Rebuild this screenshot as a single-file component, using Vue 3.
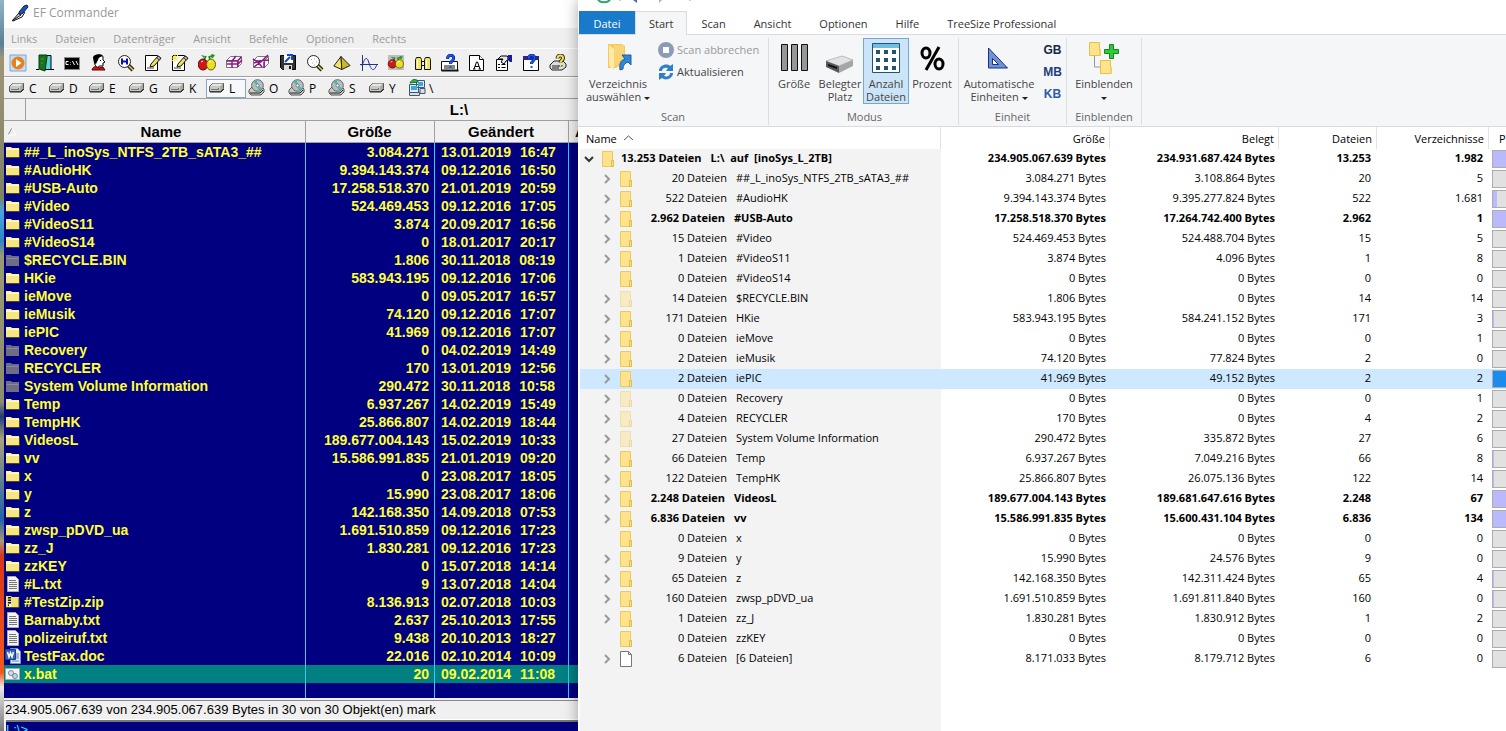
<script setup>
const menu = ['Links', 'Dateien', 'Datenträger', 'Ansicht', 'Befehle', 'Optionen', 'Rechts']

const glass = '<path d="M11.5 11.5l4.500 4.500" stroke="#222" stroke-width="4"/><path d="M12 12l4 4" stroke="#e8d84a" stroke-width="1.500"/><circle cx="7.500" cy="7.500" r="6" fill="#fff" stroke="#222"/>'
const box = '<path d="M1.500 6.500l4-4h11v7l-4 4h-11zM1.500 6.500h11l4-4M12.500 6.500v7" fill="#fff" stroke="#777"/>'
const page = '<path d="M1.500 1.500h12v15h-12z" fill="#fff" stroke="#000"/>'
const pen = '<path d="M6 13l1-3 7-8 3 2-7 8z" fill="#f2e25b" stroke="#111"/><path d="M14 2l3 2-1.500 2-3-2z" fill="#c9a0dc" stroke="#333"/><path d="M3 14h7" stroke="#444"/>'
const fruit = '<path d="M6 6l2-4M12 6l-1-4" stroke="#137a13" stroke-width="1.500"/><path d="M11 3l3-3 3 1-2 3zM6 4L3 1l4 1z" fill="#16a016"/><ellipse cx="5" cy="10.500" rx="4.800" ry="5.500" fill="#d0181c" stroke="#600"/><ellipse cx="13" cy="10.500" rx="4.500" ry="5.500" fill="#e9df23" stroke="#665b00"/><path d="M3 8l2-1M11 8l2-1" stroke="#fff"/>'
const question = '<path d="M6.500 5c0-5 7-5 6 0-.5 2-3 2-3 5" fill="none" stroke="#00009c" stroke-width="3"/><path d="M6.500 5c0-5 7-5 6 0-.5 2-3 2-3 5M9.500 12v2" fill="none" stroke="#1b5be0" stroke-width="2"/>'

const tools = [
  { name: 'Start', art: '<path d="M1 1h16v16H1z" fill="#bfe0f5" stroke="#78a9cf"/><circle cx="9" cy="9" r="6.500" fill="#ef7d1a"/><path d="M7 5l5.500 4L7 13z" fill="#fff"/>' },
  { name: 'Beenden', art: '<path d="M5 1.500h10v14H5z" fill="#5ed4dc" stroke="#000"/><path d="M3 1h8v2l-2 14-6-2z" fill="#177322" stroke="#063b0b"/><path d="M5 5h3M5 9h2" stroke="#4a2"/><path d="M0 15.500h3M14 15.500h4" stroke="#000"/>' },
  { name: 'Konsole', art: '<path d="M1.500 3.500h15v12h-15z" fill="#000" stroke="#888"/><path d="M5.500 7.500H3v3h2.500M7.500 8v.500M7.500 10v.500M9.500 7l2 4M13 7l2 4" fill="none" stroke="#fff"/>' },
  { name: 'Benutzer', art: '<path d="M4 3c2-3 9-3 9 0v3l2 2-2 1v3H9l-1 3-3-4z" fill="#fff" stroke="#000"/><path d="M3 3c2-3 7-3 10-1-3 1-4 1-5 4L6 10 4 9z" fill="#000"/><path d="M10.500 6v1" stroke="#000"/><path d="M2 16c1-4 4-4 7-2l4-1 2 3z" fill="#c31820" stroke="#600"/>' },
  { name: 'Suchen', art: glass + '<path d="M5 4.500v6M10 4.500v6M5 7.500h5" stroke="#1010b0" stroke-width="2"/>' },
  { name: 'Bearbeiten', art: page + pen },
  { name: 'Neue Datei', art: page + pen + '<path d="M1 1l6 6M7 1L1 7M4 0v8M0 4h8" stroke="#f5e838"/>' },
  { name: 'Vergleichen', art: fruit },
  { name: 'Packen', art: box + '<path d="M2 10h11l4-4M7 14V7l4-5M1.500 7h11l4-4M13 6v7" fill="none" stroke="#8b1787" stroke-width="1.500"/>' },
  { name: 'Entpacken', art: box + '<path d="M1 5l5 3 4 5M16 1l-6 6-8 6M2 9l6-2 9-1M12 8v6" fill="none" stroke="#8b1787" stroke-width="1.500"/>' },
  { name: 'Speichern', art: '<path d="M1.500 1.500h15v14h-13l-2-2z" fill="#333" stroke="#000"/><path d="M5 1h9v8H5z" fill="#fff"/><path d="M5 11h8v5H5z" fill="#ddd"/><path d="M10 12h2v3h-2z" fill="#111"/><path d="M6 8l5-5M8 1h5v5" fill="none" stroke="#1647d8" stroke-width="2"/>' },
  { name: 'Anzeigen', art: glass + '<path d="M5 6l1-1M8 5h1M6 9h1M10 8h1M8 11h1" stroke="#6cc7d8"/>' },
  { name: 'Pyramide', art: '<path d="M8 2.500L.8 12l8 3.500z" fill="#f4e45c" stroke="#222"/><path d="M8 2.500l9 9-8.200 4z" fill="#c8b62c" stroke="#222"/>' },
  { name: 'Kurve', art: '<path d="M2.500 1v16M0 10.500h18" stroke="#223a6a"/><path d="M2 12C5 3 7 2 9 9s5 10 8 1" fill="none" stroke="#2222cc"/>' },
  { name: 'Synchronisieren', art: '<path d="M1 1h16v15H1z" fill="#bdbdbd"/><g transform="translate(1 2) scale(.88 .75)">' + fruit + '</g>' },
  { name: 'Fernglas', art: '<path d="M1.500 5.500l1-2h4l1 2v10h-6zM10.500 5.500l1-2h4l1 2v10h-6z" fill="#f2e55c" stroke="#111"/><path d="M7.500 7.500h3M7.500 11.500h3" stroke="#111"/><path d="M3.500 6v8M12.500 6v8" stroke="#fff"/>' },
  { name: 'Katalog', art: '<path d="M.5 7.500h16v9H.5z" fill="#fff" stroke="#111"/><path d="M3 12h11M3 14h11" stroke="#111"/><path d="M.5 16.500h17" stroke="#111" stroke-width="2"/>' + question },
  { name: 'Schrift', art: '<path d="M1.500 1.500h10l4 4v11h-14z" fill="#fff" stroke="#000"/><path d="M11.500 1.500v4h4" fill="#fff" stroke="#000"/><path d="M6 15l2.500-7h1l2.500 7M7 12.500h4M5 15h2.500M10.500 15H13" fill="none" stroke="#000"/>' },
  { name: 'Eigenschaften', art: '<path d="M1.500 5.500h11v11h-11z" fill="#fff" stroke="#000"/><path d="M3 10.500h2M6.500 10.500h4M3 13.500h2M6.500 13.500h4" stroke="#000"/><path d="M3 5l3-3h6l3 3-4 2-2 3-3-2 2-3z" fill="#e9e9e9" stroke="#000"/><path d="M13 1h4v7h-2l-3-3z" fill="#1a1a9a"/>' },
  { name: 'Hilfe', art: '<path d="M1.500 2.500h15v14h-15z" fill="#fff" stroke="#000"/><path d="M1 2h16v4H1z" fill="#2a2a88"/>' + question },
  { name: 'Info', art: '<path d="M1 11l4-4h9l3 3v3l-4 3H3l-2-2z" fill="#ddd" stroke="#222"/><path d="M3 12h8M3 14h7" stroke="#222"/><path d="M8.500 4.500c0-4 6-4 5.500 0-.500 2-2.500 2-2.500 4M11.500 11v1.500" fill="none" stroke="#333" stroke-width="4"/><path d="M8.500 4.500c0-4 6-4 5.500 0-.500 2-2.500 2-2.500 4M11.500 11v1.500" fill="none" stroke="#f3e23c" stroke-width="2"/>' },
  { name: 'Mehr', art: '<path d="M7 9h5" stroke="#000" stroke-width="2"/>' }
]

const art = {
  hdd: '<path d="M1.500 7.500l3-3h11v5l-3 3h-11z" fill="#aaa" stroke="#555"/><path d="M2 7.500l3-3h10l-3 3z" fill="#e4e4e0"/><path d="M2 8h10v4H2z" fill="#c8c8c4"/><path d="M3 10.500h7" stroke="#777"/><path d="M10 9h1v2h-1z" fill="#2c9b3c"/><path d="M2 13h11l3-3" fill="none" stroke="#222"/>',
  cd: '<path d="M1 11l3-3h10l2 2v3l-3 3H3l-2-2z" fill="#c9c9c5" stroke="#555"/><circle cx="9.500" cy="6.500" r="5.800" fill="#b7bec2" stroke="#666"/><path d="M9.500 6.500L5 3l4-2zM9.500 6.500l5 3-4 3z" fill="#45bdb0"/><circle cx="9.500" cy="6.500" r="1.500" fill="#fff" stroke="#777"/><path d="M2 14h10l3-3" fill="none" stroke="#222"/>',
  net: '<path d="M1.500 5.500h9v8h-9zM8.500 1.500h8v7h-8z" fill="#e4e9ef" stroke="#345b78"/><path d="M3 7h6v4H3zM10 3h5v4h-5z" fill="#39a9e0"/><path d="M1.500 13.500h10v3h-10zM12 9.500h5v5h-5z" fill="#d8dee6" stroke="#456"/><path d="M2 4c2-5 8-4 8-1z" fill="#38b24a" stroke="#1c6a2c"/>',
  dir: '<path d="M1 5V3h5l1 1h7v9H1z" fill="#fdf3a0"/><path d="M1 6h13v7H1z" fill="#f6e684"/><path d="M1 13.500h13.500V5" fill="none" stroke="#4c4a1c"/><path d="M1.500 5.500h12" stroke="#fffbd0"/>',
  hidden: '<path d="M1 5V3h5l1 1h7v10H1z" fill="#6f6d86"/><path d="M1.500 6.500h12" stroke="#8b89a0"/>',
  txt: '<path d="M2.500.5h8l3 3v12h-11z" fill="#f4f4f4" stroke="#aaa"/><path d="M4 4.500h7M4 6.500h8M4 8.500h8M4 10.500h8M4 12.500h8" stroke="#777"/>',
  zip: '<path d="M1 4V2h5l1 1h7v10H1z" fill="#f3e27c"/><path d="M1 13.500h13V4" fill="none" stroke="#4c4a1c"/><path d="M4.500 3v10" stroke="#111" stroke-width="3" stroke-dasharray="1.500 1"/><path d="M4 10h2v3H4z" fill="#fff"/>',
  doc: '<path d="M5.500.5h7l3 3v12h-10z" fill="#e6eefb" stroke="#6f93cf"/><path d="M11 6h3M11 8h3M11 10h3M7 13h7" stroke="#5b83c8"/><path d="M.5 1.500h10v10H.5z" fill="#3263b8" stroke="#173f87"/><path d="M2.500 4l1.500 5 1.500-4L7 9l1.500-5" fill="none" stroke="#fff" stroke-width="1.500"/>',
  bat: '<path d="M.5 2.500h14v11H.5z" fill="#f2f4f6" stroke="#9aa"/><circle cx="6" cy="7" r="2.500" fill="#dde" stroke="#789"/><circle cx="10" cy="10" r="2.500" fill="#bcd8ee" stroke="#68a"/>'
}

const drives = [['C', 'hdd'], ['D', 'hdd'], ['E', 'hdd'], ['G', 'hdd'], ['K', 'hdd'], ['L', 'hdd'], ['O', 'cd'], ['P', 'cd'], ['S', 'cd'], ['Y', 'hdd'], ['\\', 'net']]

const files = [
  ['dir', '##_L_inoSys_NTFS_2TB_sATA3_##', '3.084.271', '13.01.2019', '16:47'],
  ['dir', '#AudioHK', '9.394.143.374', '09.12.2016', '16:50'],
  ['dir', '#USB-Auto', '17.258.518.370', '21.01.2019', '20:59'],
  ['dir', '#Video', '524.469.453', '09.12.2016', '17:05'],
  ['dir', '#VideoS11', '3.874', '20.09.2017', '16:56'],
  ['dir', '#VideoS14', '0', '18.01.2017', '20:17'],
  ['hidden', '$RECYCLE.BIN', '1.806', '30.11.2018', '08:19'],
  ['dir', 'HKie', '583.943.195', '09.12.2016', '17:06'],
  ['dir', 'ieMove', '0', '09.05.2017', '16:57'],
  ['dir', 'ieMusik', '74.120', '09.12.2016', '17:07'],
  ['dir', 'iePIC', '41.969', '09.12.2016', '17:07'],
  ['hidden', 'Recovery', '0', '04.02.2019', '14:49'],
  ['hidden', 'RECYCLER', '170', '13.01.2019', '12:56'],
  ['hidden', 'System Volume Information', '290.472', '30.11.2018', '10:58'],
  ['dir', 'Temp', '6.937.267', '14.02.2019', '15:49'],
  ['dir', 'TempHK', '25.866.807', '14.02.2019', '18:44'],
  ['dir', 'VideosL', '189.677.004.143', '15.02.2019', '10:33'],
  ['dir', 'vv', '15.586.991.835', '21.01.2019', '09:20'],
  ['dir', 'x', '0', '23.08.2017', '18:05'],
  ['dir', 'y', '15.990', '23.08.2017', '18:06'],
  ['dir', 'z', '142.168.350', '14.09.2018', '07:53'],
  ['dir', 'zwsp_pDVD_ua', '1.691.510.859', '09.12.2016', '17:23'],
  ['dir', 'zz_J', '1.830.281', '09.12.2016', '17:23'],
  ['dir', 'zzKEY', '0', '15.07.2018', '14:14'],
  ['txt', '#L.txt', '9', '13.07.2018', '14:04'],
  ['zip', '#TestZip.zip', '8.136.913', '02.07.2018', '10:03'],
  ['txt', 'Barnaby.txt', '2.637', '25.10.2013', '17:55'],
  ['txt', 'polizeiruf.txt', '9.438', '20.10.2013', '18:27'],
  ['doc', 'TestFax.doc', '22.016', '02.10.2014', '10:09'],
  ['bat', 'x.bat', '20', '09.02.2014', '11:08']
]

const tabs = ['Start', 'Scan', 'Ansicht', 'Optionen', 'Hilfe', 'TreeSize Professional']

// name, files, size, allocated, folders, bar fill in px, flags: b = bold, n = no children, f = faded, s = selected, p = plain files
const tree = [
  ['##_L_inoSys_NTFS_2TB_sATA3_##', '20', '3.084.271', '3.108.864', '5', 0, ''],
  ['#AudioHK', '522', '9.394.143.374', '9.395.277.824', '1.681', 4, ''],
  ['#USB-Auto', '2.962', '17.258.518.370', '17.264.742.400', '1', 22, 'b'],
  ['#Video', '15', '524.469.453', '524.488.704', '5', 0, ''],
  ['#VideoS11', '1', '3.874', '4.096', '8', 0, ''],
  ['#VideoS14', '0', '0', '0', '0', 0, 'n'],
  ['$RECYCLE.BIN', '14', '1.806', '0', '14', 0, 'f'],
  ['HKie', '171', '583.943.195', '584.241.152', '3', 1, ''],
  ['ieMove', '0', '0', '0', '1', 0, ''],
  ['ieMusik', '2', '74.120', '77.824', '0', 0, ''],
  ['iePIC', '2', '41.969', '49.152', '2', 22, 's'],
  ['Recovery', '0', '0', '0', '1', 0, 'f'],
  ['RECYCLER', '4', '170', '0', '2', 0, 'f'],
  ['System Volume Information', '27', '290.472', '335.872', '6', 0, 'f'],
  ['Temp', '66', '6.937.267', '7.049.216', '8', 1, ''],
  ['TempHK', '122', '25.866.807', '26.075.136', '14', 1, ''],
  ['VideosL', '2.248', '189.677.004.143', '189.681.647.616', '67', 22, 'b'],
  ['vv', '6.836', '15.586.991.835', '15.600.431.104', '134', 22, 'b'],
  ['x', '0', '0', '0', '0', 0, 'n'],
  ['y', '9', '15.990', '24.576', '0', 0, ''],
  ['z', '65', '142.168.350', '142.311.424', '4', 1, ''],
  ['zwsp_pDVD_ua', '160', '1.691.510.859', '1.691.811.840', '0', 1, ''],
  ['zz_J', '1', '1.830.281', '1.830.912', '2', 0, ''],
  ['zzKEY', '0', '0', '0', '0', 0, 'n'],
  ['[6 Dateien]', '6', '8.171.033', '8.179.712', '0', 0, 'p']
].map(([name, count, size, used, dirs, fill, flags]) => ({ name, count, size, used, dirs, fill, flags }))
</script>

<template>
  <div class="desktop">
    <div class="wallpaper"></div>

    <section class="commander">
      <header class="title">
        <svg width="18" height="18" viewBox="0 0 18 18" fill="none">
          <path d="M1 17l7-8 2 2z" fill="#ccc" stroke="#111" />
          <path d="M8 8l5-6 3-1 1 2-5 6-3 2z" fill="#1d4fb8" stroke="#0b1c50" />
          <path d="M2 17l9-4 3-5" stroke="#111" />
        </svg>
        <span>EF Commander</span>
      </header>
      <nav class="menu">
        <button v-for="m in menu" :key="m">{{ m }}</button>
      </nav>
      <div class="tools">
        <button v-for="t in tools" :key="t.name" :aria-label="t.name">
          <svg width="18" height="18" viewBox="0 0 18 18" v-html="t.art"></svg>
        </button>
      </div>
      <div class="drives">
        <button v-for="[letter, kind] in drives" :key="letter" :class="{ on: letter === 'L' }">
          <svg width="18" height="18" viewBox="0 0 18 18" v-html="art[kind]"></svg>
          <span>{{ letter }}</span>
        </button>
      </div>
      <div class="path"><i></i><b>L:\</b></div>
      <div class="files">
        <table>
          <colgroup><col class="c1" /><col class="c2" /><col class="c3" /><col /></colgroup>
          <thead>
            <tr>
              <th>
                <div class="sorted">
                  <svg width="10" height="8" viewBox="0 0 10 8"><path d="M0 7L4 0" stroke="#888" /><path d="M4 0l4 7H0" fill="none" stroke="#fff" /></svg>
                  <span>Name</span>
                </div>
              </th>
              <th>Größe</th>
              <th>Geändert</th>
              <th class="cut">A</th>
            </tr>
          </thead>
          <tbody>
            <tr v-for="f in files" :key="f[1]" :class="{ cursor: f[1] === 'x.bat' }">
              <td>
                <div class="file">
                  <svg width="16" height="16" viewBox="0 0 16 16" v-html="art[f[0]]"></svg>
                  <span>{{ f[1] }}</span>
                </div>
              </td>
              <td class="num">{{ f[2] }}</td>
              <td><div class="date"><span>{{ f[3] }}</span><span>{{ f[4] }}</span></div></td>
              <td></td>
            </tr>
            <tr class="rest"><td></td><td></td><td></td><td></td></tr>
          </tbody>
        </table>
      </div>
      <div class="status">234.905.067.639 von 234.905.067.639 Bytes in 30 von 30 Objekt(en) mark</div>
      <div class="prompt">L:\&gt;</div>
    </section>

    <section class="treesize">
      <div class="quick">
        <svg width="100" height="4" viewBox="0 0 100 4" fill="none">
          <path d="M2 0c3 3 9 3 12 0" stroke="#2ea56a" stroke-width="2" />
          <path d="M24 0v1M94 0v1" stroke="#999" />
          <path d="M37 0l4 3V0z" fill="#3571b8" />
          <path d="M66 0l-3 3V0z" fill="#a9b4c2" />
        </svg>
      </div>
      <nav class="tabs">
        <button class="datei">Datei</button>
        <button v-for="t in tabs" :key="t" :class="{ active: t === 'Start' }">{{ t }}</button>
      </nav>
      <div class="ribbon">
        <div class="group scan">
          <div class="body">
            <button class="big wide">
              <svg width="32" height="34" viewBox="0 0 32 34">
                <path d="M6 3h14l3 2v16l-9 6H6z" fill="#f4c95f" />
                <path d="M7 4l5 4v21l-5-4z" fill="#ffe9a6" />
                <path d="M12 4h10v16l-10 6z" fill="#f9d578" />
                <path d="M18 29c-1-7 1-10 5-11l-3-4h9v10l-3-3c-3 1-5 3-5 7z" fill="#2f87d6" stroke="#1b5ea6" />
              </svg>
              <span>Verzeichnis<br />auswählen <i class="drop"></i></span>
            </button>
            <div class="lines">
              <button class="off">
                <svg width="16" height="16" viewBox="0 0 16 16"><circle cx="8" cy="8" r="8" fill="#8d9bb3" /><path d="M5 5h6v6H5z" fill="#fff" /></svg>
                Scan abbrechen
              </button>
              <button>
                <svg width="16" height="16" viewBox="0 0 16 16">
                  <path d="M1 7c0-6 8-8 11-5l3-2v7H8l2-3C7 3 4 4 4 7zM15 9c0 6-8 8-11 5l-3 2V9h7l-2 3c3 1 6 0 6-3z" fill="#2f7fc9" />
                </svg>
                Aktualisieren
              </button>
            </div>
          </div>
          <h2>Scan</h2>
        </div>
        <div class="group modus">
          <div class="body">
            <button class="big">
              <svg width="32" height="34" viewBox="0 0 32 34"><path d="M3.500 3.500h6v26h-6zM13.500 3.500h6v26h-6zM23.500 3.500h6v26h-6z" fill="#979797" stroke="#111" /></svg>
              <span>Größe</span>
            </button>
            <button class="big">
              <svg width="32" height="34" viewBox="0 0 32 34">
                <path d="M2 20l16-5 11 4-14 6z" fill="#e3e3e5" stroke="#bbb" />
                <path d="M2 20l13 5v7L2 26z" fill="#55585c" />
                <path d="M15 25l14-6v6l-14 7z" fill="#a5a6aa" />
                <path d="M4 23l9 3v2l-9-3z" fill="#111" />
              </svg>
              <span>Belegter<br />Platz</span>
            </button>
            <button class="big on">
              <svg width="32" height="34" viewBox="0 0 32 34">
                <path d="M2.500 2.500h27v29h-27z" fill="#fff" stroke="#24536f" />
                <path d="M3 3h26v4H3z" fill="#70bddf" />
                <path d="M6 9h4v4H6zM14 9h4v4h-4zM22 9h4v4h-4zM6 17h4v4H6zM14 17h4v4h-4zM22 17h4v4h-4zM6 25h4v4H6zM14 25h4v4h-4zM22 25h4v4h-4z" fill="#24536f" />
              </svg>
              <span>Anzahl<br />Dateien</span>
            </button>
            <button class="big">
              <svg width="32" height="34" viewBox="0 0 32 34" fill="none" stroke="#000">
                <ellipse cx="10" cy="12" rx="4" ry="5" stroke-width="3" />
                <ellipse cx="23" cy="23" rx="4" ry="5" stroke-width="3" />
                <path d="M23 6L10 29" stroke-width="3" />
              </svg>
              <span>Prozent</span>
            </button>
          </div>
          <h2>Modus</h2>
        </div>
        <div class="group unit">
          <div class="body">
            <button class="big wide">
              <svg width="32" height="34" viewBox="0 0 32 34"><path d="M5.500 7v20h19z" fill="#6f91dc" stroke="#1c3372" /><path d="M9.500 17.500v6h6z" fill="#fff" stroke="#1c3372" /></svg>
              <span>Automatische<br />Einheiten <i class="drop"></i></span>
            </button>
            <div class="units"><button>GB</button><button>MB</button><button>KB</button></div>
          </div>
          <h2>Einheit</h2>
        </div>
        <div class="group show">
          <div class="body">
            <button class="big wide">
              <svg width="32" height="34" viewBox="0 0 32 34">
                <path d="M6.500 15v11h6" fill="none" stroke="#999" />
                <path d="M1.500 1.500h10v13h-10zM12.500 19.500h10v13h-10z" fill="#ffe48c" stroke="#e5c04f" />
                <path d="M11 8h2v7h-2zM22 26h2v7h-2z" fill="#f1cf62" />
                <path d="M21.500 3.500h4v5h5v4h-5v5h-4v-5h-5v-4h5z" fill="#2ecb38" stroke="#128a1c" />
              </svg>
              <span>Einblenden<br /><i class="drop"></i></span>
            </button>
          </div>
          <h2>Einblenden</h2>
        </div>
      </div>

      <div class="tree">
        <table>
          <colgroup><col class="t1" /><col class="t2" /><col class="t2" /><col class="t3" /><col class="t4" /><col /></colgroup>
          <thead>
            <tr>
              <th class="first">Name <svg width="9" height="6" viewBox="0 0 9 6"><path d="M0 5l4.500-4L9 5" fill="none" stroke="#555" /></svg></th>
              <th>Größe</th>
              <th>Belegt</th>
              <th>Dateien</th>
              <th>Verzeichnisse</th>
              <th class="pct">P</th>
            </tr>
          </thead>
          <tbody>
            <tr class="bold">
              <td>
                <div class="node root">
                  <svg class="chev" width="10" height="10" viewBox="0 0 10 10"><path d="M1 3l4 4 4-4" fill="none" stroke="#333" stroke-width="2" /></svg>
                  <svg width="14" height="18" viewBox="0 0 14 18"><path d="M1.500 1.500h10v15h-10z" fill="#ffe38a" stroke="#ecc95c" /><path d="M10.500 10.500h2v6h-2z" fill="#ffe38a" stroke="#dfb94a" /></svg>
                  <span>13.253 Dateien</span><span>L:\&nbsp; auf&nbsp; [inoSys_L_2TB]</span>
                </div>
              </td>
              <td>234.905.067.639 Bytes</td>
              <td>234.931.687.424 Bytes</td>
              <td>13.253</td>
              <td>1.982</td>
              <td class="pct"><div class="bar"><div :style="{ width: '22px' }"></div></div></td>
            </tr>
            <tr v-for="r in tree" :key="r.name" :class="{ bold: r.flags === 'b', sel: r.flags === 's' }">
              <td>
                <div class="node">
                  <svg class="chev" width="10" height="10" viewBox="0 0 10 10"><path v-if="r.flags !== 'n'" d="M3 1l4 4-4 4" fill="none" stroke="#999" stroke-width="2" /></svg>
                  <svg v-if="r.flags === 'p'" width="14" height="18" viewBox="0 0 14 18"><path d="M1.500 1.500h8l3 3v12h-11zM9.500 1.500v3h3" fill="#fff" stroke="#777" /></svg>
                  <svg v-else :class="{ faded: r.flags === 'f' }" width="14" height="18" viewBox="0 0 14 18"><path d="M1.500 1.500h10v15h-10z" fill="#ffe38a" stroke="#ecc95c" /><path d="M10.500 10.500h2v6h-2z" fill="#ffe38a" stroke="#dfb94a" /></svg>
                  <span class="count">{{ r.count }} Dateien</span><span>{{ r.name }}</span>
                </div>
              </td>
              <td>{{ r.size }} Bytes</td>
              <td>{{ r.used }} Bytes</td>
              <td>{{ r.count }}</td>
              <td>{{ r.dirs }}</td>
              <td class="pct"><div class="bar"><div :style="{ width: r.fill + 'px' }"></div></div></td>
            </tr>
            <tr class="rest"><td></td><td></td><td></td><td></td><td></td><td></td></tr>
          </tbody>
        </table>
      </div>
    </section>
  </div>
</template>

<style>
body {
  margin: 0;
}
</style>

<style scoped>
* {
  box-sizing: border-box;
}
.desktop {
  display: flex;
  height: 100vh;
  overflow: hidden;
  font-family: "Open Sans", "Noto Sans", sans-serif;
  font-size: 11px;
  color: #000;
}
button {
  margin: 0;
  padding: 0;
  border: 0;
  background: none;
  font: inherit;
  color: inherit;
  white-space: nowrap;
}
svg {
  flex: none;
  fill: none;
}
table {
  width: 100%;
  height: 100%;
  table-layout: fixed;
  border-collapse: separate;
  border-spacing: 0;
}
th,
td {
  padding: 0;
  white-space: nowrap;
  overflow: hidden;
}
.wallpaper {
  flex: 0 0 4px;
  background: linear-gradient(#8fb6c8 0, #5a8096 6%, #9d9676 8%, #7e8264 27%, #48a5dc 29%, #2f86c4 33%, #9a9a72 35%, #8f8c70 55%, #233b78 57%, #a9a37c 60%, #1f62a8 71%, #a89a78 74%, #d8351c 76%, #ef5a1c 92%, #e8e8e8 94%, #777 100%);
}

/* left window */
.commander {
  flex: 0 0 574px;
  min-width: 0;
  display: flex;
  flex-direction: column;
  background: #f0f0f0;
}
.title {
  height: 28px;
  display: flex;
  align-items: center;
  gap: 4px;
  padding: 0 0 3px 7px;
  background: #fff;
  color: #999;
  font-size: 12px;
}
.menu {
  height: 20px;
  display: flex;
  align-items: center;
  gap: 18px;
  padding-left: 7px;
  color: #9c9c9c;
}
.tools {
  height: 29px;
  display: flex;
  border-top: 1px solid #fff;
  border-bottom: 1px solid #a0a0a0;
  overflow: hidden;
}
.tools button {
  flex: 0 0 27px;
  display: flex;
  align-items: center;
  justify-content: center;
}
.drives {
  height: 22px;
  display: flex;
  align-items: center;
  padding-left: 2px;
  border-bottom: 1px solid #a0a0a0;
  border-top: 1px solid #fff;
}
.drives button {
  flex: 0 0 40px;
  height: 19px;
  display: flex;
  align-items: center;
  gap: 3px;
  padding-left: 1px;
  border: 1px solid transparent;
  font-size: 12px;
}
.drives .on {
  border-color: #88a5c4;
  background: #f6f8fa;
}
.path {
  height: 22px;
  display: flex;
  border-bottom: 1px solid #a0a0a0;
  font: bold 15px/21px "Liberation Sans", Arial, sans-serif;
}
.path i {
  width: 22px;
  border-right: 1px solid #a0a0a0;
}
.path b {
  flex: 1;
  padding-left: 314px;
  text-align: center;
}
.files {
  flex: 1;
  min-height: 0;
  background: #000080;
  color: #ff3;
  font: bold 14px/18px "Liberation Sans", Arial, sans-serif;
}
.c1 {
  width: 302px;
}
.c2 {
  width: 129px;
}
.c3 {
  width: 134px;
}
.files th {
  height: 22px;
  padding: 0 1px 0 0;
  background: #f0f0f0;
  border-right: 1px solid #a0a0a0;
  border-bottom: 1px solid #a0a0a0;
  color: #000;
  font-size: 15px;
}
.files th.cut {
  border-right: 0;
  text-align: left;
  padding-left: 6px;
}
.sorted {
  display: flex;
  align-items: center;
  padding-left: 4px;
}
.sorted span {
  flex: 1;
}
.files td {
  height: 18px;
  border-right: 1px solid #3cc8e8;
}
.files td:last-child {
  border-right: 0;
}
.files .rest td,
.tree .rest td {
  height: auto;
}
.file {
  display: flex;
  align-items: center;
  height: 18px;
  gap: 3px;
  padding-left: 1px;
}
.files .num {
  text-align: right;
  padding-right: 5px;
}
.date {
  display: flex;
  gap: 9px;
  padding-left: 6px;
}
.cursor td {
  background: #008080;
}
.status {
  height: 20px;
  margin-top: 2px;
  border-top: 1px solid #888;
  border-bottom: 1px solid #fff;
  font: 13px/18px "Liberation Sans", Arial, sans-serif;
  padding-left: 1px;
}
.prompt {
  height: 11px;
  margin-left: 2px;
  border-top: 2px solid #777;
  background: #000080;
  color: #3ce0f0;
  font: 13px/16px "Liberation Sans", Arial, sans-serif;
  overflow: hidden;
}

/* right window */
.treesize {
  position: relative;
  flex: 1;
  min-width: 0;
  display: flex;
  flex-direction: column;
  background: #fff;
  box-shadow: 0 0 14px rgba(0, 0, 0, 0.35);
}
.quick {
  height: 11px;
  padding-left: 18px;
  line-height: 0;
}
.tabs {
  height: 24px;
  display: flex;
  padding-left: 1px;
  border-bottom: 1px solid #dadbdc;
  color: #333;
}
.tabs button {
  height: 24px;
  padding: 0 13px;
  border: 1px solid transparent;
  border-bottom: 0;
}
.tabs .datei {
  height: 23px;
  width: 56px;
  padding: 0;
  background: #1979ca;
  color: #fff;
}
.tabs .active {
  background: #f5f6f7;
  border-color: #dadbdc;
}
.ribbon {
  height: 92px;
  display: flex;
  background: #f5f6f7;
  border-bottom: 1px solid #dadbdc;
  color: #444;
}
.group {
  display: flex;
  flex-direction: column;
  margin: 3px 0 1px;
  border-right: 1px solid #dcdddf;
}
.group h2 {
  margin: 0;
  font-size: 11px;
  line-height: 16px;
  font-weight: normal;
  text-align: center;
  color: #666;
}
.body {
  flex: 1;
  display: flex;
}
.scan {
  width: 191px;
}
.modus {
  width: 190px;
  padding-left: 2px;
}
.unit {
  width: 108px;
}
.show {
  width: 75px;
}
.big {
  width: 46px;
  height: 66px;
  display: flex;
  flex-direction: column;
  align-items: center;
  border: 1px solid transparent;
  padding-top: 2px;
  line-height: 13px;
}
.big span {
  margin-top: 2px;
}
.big.on {
  background: #cce4f7;
  border-color: #6ea8dc;
}
.big.wide {
  width: 80px;
}
.show .big.wide {
  width: 74px;
}
.drop {
  display: inline-block;
  vertical-align: middle;
  border: 3px solid transparent;
  border-top-color: #222;
  border-bottom: 0;
}
.lines {
  display: flex;
  flex-direction: column;
  gap: 6px;
  padding-top: 4px;
}
.lines button {
  display: flex;
  align-items: center;
  gap: 3px;
  line-height: 16px;
}
.lines .off {
  color: #999;
}
.units {
  flex: 1;
  display: flex;
  flex-direction: column;
  align-items: center;
  padding-top: 1px;
  font: bold 12px/22px "Liberation Sans", Arial, sans-serif;
  color: #1e3f7a;
}
.units button:first-child {
  color: #14264a;
}
.units button:last-child {
  color: #2a5cab;
}
.tree {
  flex: 1;
  min-height: 0;
  padding-left: 2px;
}
.t1 {
  width: 361px;
}
.t2 {
  width: 169px;
}
.t3 {
  width: 98px;
}
.t4 {
  width: 112px;
}
.tree th {
  height: 22px;
  font-weight: normal;
  text-align: right;
  padding-right: 4px;
  border-right: 1px solid #e2e2e2;
}
.tree th.first {
  text-align: left;
  padding-left: 6px;
}
.tree th.first svg {
  margin: 0 0 2px 4px;
}
.tree th.pct {
  text-align: left;
  padding: 0 0 0 10px;
  border-right: 0;
}
.tree td {
  height: 20px;
  line-height: 16px;
  text-align: right;
  padding: 0 4px 2px 0;
}
.tree td:nth-child(4),
.tree td:nth-child(5) {
  padding-right: 6px;
}
.tree td:first-child {
  background: #f3f3f3;
  padding: 0;
}
.tree td.pct {
  padding: 0 0 0 3px;
}
.node {
  display: flex;
  align-items: center;
  height: 20px;
  padding-left: 22px;
}
.node.root {
  padding-left: 4px;
}
.node .chev {
  margin-right: 7px;
}
.node span {
  padding-bottom: 2px;
}
.node span + span {
  margin-left: 9px;
}
.root span:first-of-type {
  margin-left: 6px;
}
.count {
  width: 94px;
  text-align: right;
}
.bold .count {
  width: 92px;
}
.bold {
  font-weight: bold;
}
.tree .sel td {
  background: #cde8ff;
}
.faded {
  opacity: 0.45;
}
.bar {
  width: 100px;
  height: 18px;
  border: 1px solid #adadad;
  background: #e1e1e1;
}
.bar div {
  height: 16px;
  background: #b9b9fb;
}
.sel .bar div {
  background: #1a8cf0;
}
</style>
